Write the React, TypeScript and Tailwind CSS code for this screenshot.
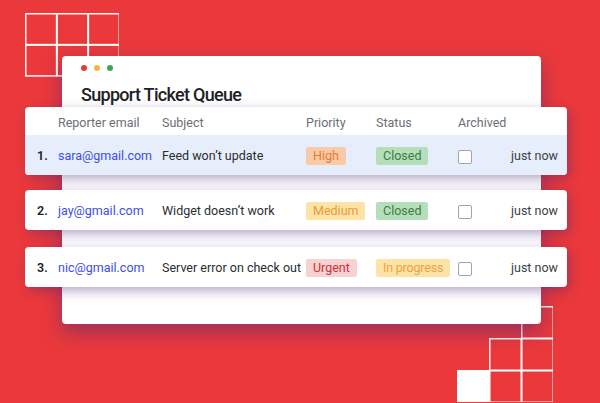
import React from 'react';

type Ticket = {
  email: string;
  subject: string;
  priority: { label: string; cls: string };
  status: { label: string; cls: string };
};

const tickets: Ticket[] = [
  {
    email: 'sara@gmail.com',
    subject: 'Feed won’t update',
    priority: { label: 'High', cls: 'bg-[#f9caa8] text-[#e47a34]' },
    status: { label: 'Closed', cls: 'bg-[#b5dfba] text-[#3b7a45]' },
  },
  {
    email: 'jay@gmail.com',
    subject: 'Widget doesn’t work',
    priority: { label: 'Medium', cls: 'bg-[#fde4a6] text-[#ea9a3c]' },
    status: { label: 'Closed', cls: 'bg-[#b5dfba] text-[#3b7a45]' },
  },
  {
    email: 'nic@gmail.com',
    subject: 'Server error on check out',
    priority: { label: 'Urgent', cls: 'bg-[#f8d1d1] text-[#cc2f37]' },
    status: { label: 'In progress', cls: 'bg-[#fde4a6] text-[#eea23f] tracking-[-0.2px]' },
  },
];

const cols = 'grid grid-cols-[21px_104px_144px_70px_82px_53px_1fr] items-center pl-3';

function GridDeco({ className, cells, filled }: { className: string; cells: [number, number][]; filled?: [number, number] }) {
  return (
    <svg className={className} viewBox="0 0 96 96" fill="none">
      {filled && <rect x={filled[0] * 32} y={filled[1] * 32} width="32" height="32" fill="#fff" />}
      {cells.map(([c, r], i) => (
        <rect key={i} x={c * 32 + 0.75} y={r * 32 + 0.75} width="31.5" height="31.5" stroke="#fff" strokeWidth="1.5" />
      ))}
    </svg>
  );
}

function Row({ t, n, highlight }: { t: Ticket; n: number; highlight?: boolean }) {
  return (
    <div className={`${cols} h-[40px] pt-[3px] text-[12.5px] ${highlight ? 'bg-[#e7eefb]' : 'bg-white'}`}>
      <span className="font-semibold text-[#202124]">{n}.</span>
      <span className="text-[#3d4ee2]">{t.email}</span>
      <span className="text-[#2b2d30]">{t.subject}</span>
      <div>
        <span className={`inline-block rounded-[2px] px-[7px] leading-[18px] ${t.priority.cls}`}>{t.priority.label}</span>
      </div>
      <div>
        <span className={`inline-block rounded-[2px] px-[7px] leading-[18px] ${t.status.cls}`}>{t.status.label}</span>
      </div>
      <div>
        <div className="w-[14px] h-[14px] rounded-[2px] border-[1.5px] border-[#a0a4a8] bg-white" />
      </div>
      <span className="text-[#3c4043]">just now</span>
    </div>
  );
}

export default function App() {
  return (
    <div
      className="relative w-[600px] h-[403px] overflow-hidden bg-[#eb393b] pt-[56px]"
      style={{ fontFamily: 'Roboto, "Noto Sans", sans-serif' }}
    >
      {/* decorative grids */}
      <GridDeco
        className="absolute left-[25px] top-[13px] w-[94px] h-[94px]"
        cells={[[0, 0], [1, 0], [2, 0], [0, 1], [1, 1], [2, 1]]}
      />
      <GridDeco
        className="absolute left-[457px] top-[306px] w-[96px] h-[96px]"
        cells={[[2, 0], [1, 1], [2, 1], [1, 2], [2, 2]]}
        filled={[0, 2]}
      />

      <div className="relative ml-[62px] w-[479px] h-[268px] rounded-[4px] bg-white shadow-[0_8px_20px_rgba(70,40,120,0.5)]">
        <div className="flex gap-[7px] pl-[19px] pt-[9px]">
          <span className="w-[6px] h-[6px] rounded-full bg-[#e63a3a]" />
          <span className="w-[6px] h-[6px] rounded-full bg-[#f5b63d]" />
          <span className="w-[6px] h-[6px] rounded-full bg-[#3aa757]" />
        </div>
        <h1 className="pl-[19px] mt-[12px] text-[18px] leading-[24px] font-medium tracking-[-0.7px] text-[#202124]">
          Support Ticket Queue
        </h1>

        <div className="-ml-[37px] w-[542px]">
          <div className="rounded-[4px] overflow-hidden bg-white shadow-[3px_4px_12px_rgba(70,40,120,0.4)]">
            <div className={`${cols} h-[28px] pt-[4px] text-[12.5px] text-[#6b6f74]`}>
              <span />
              <span>Reporter email</span>
              <span>Subject</span>
              <span>Priority</span>
              <span>Status</span>
              <span>Archived</span>
              <span />
            </div>
            <Row t={tickets[0]} n={1} highlight />
          </div>
          <div className="mt-[15px] rounded-[4px] overflow-hidden shadow-[3px_4px_12px_rgba(70,40,120,0.4)]">
            <Row t={tickets[1]} n={2} />
          </div>
          <div className="mt-[17px] rounded-[4px] overflow-hidden shadow-[3px_4px_12px_rgba(70,40,120,0.4)]">
            <Row t={tickets[2]} n={3} />
          </div>
        </div>
      </div>
    </div>
  );
}
